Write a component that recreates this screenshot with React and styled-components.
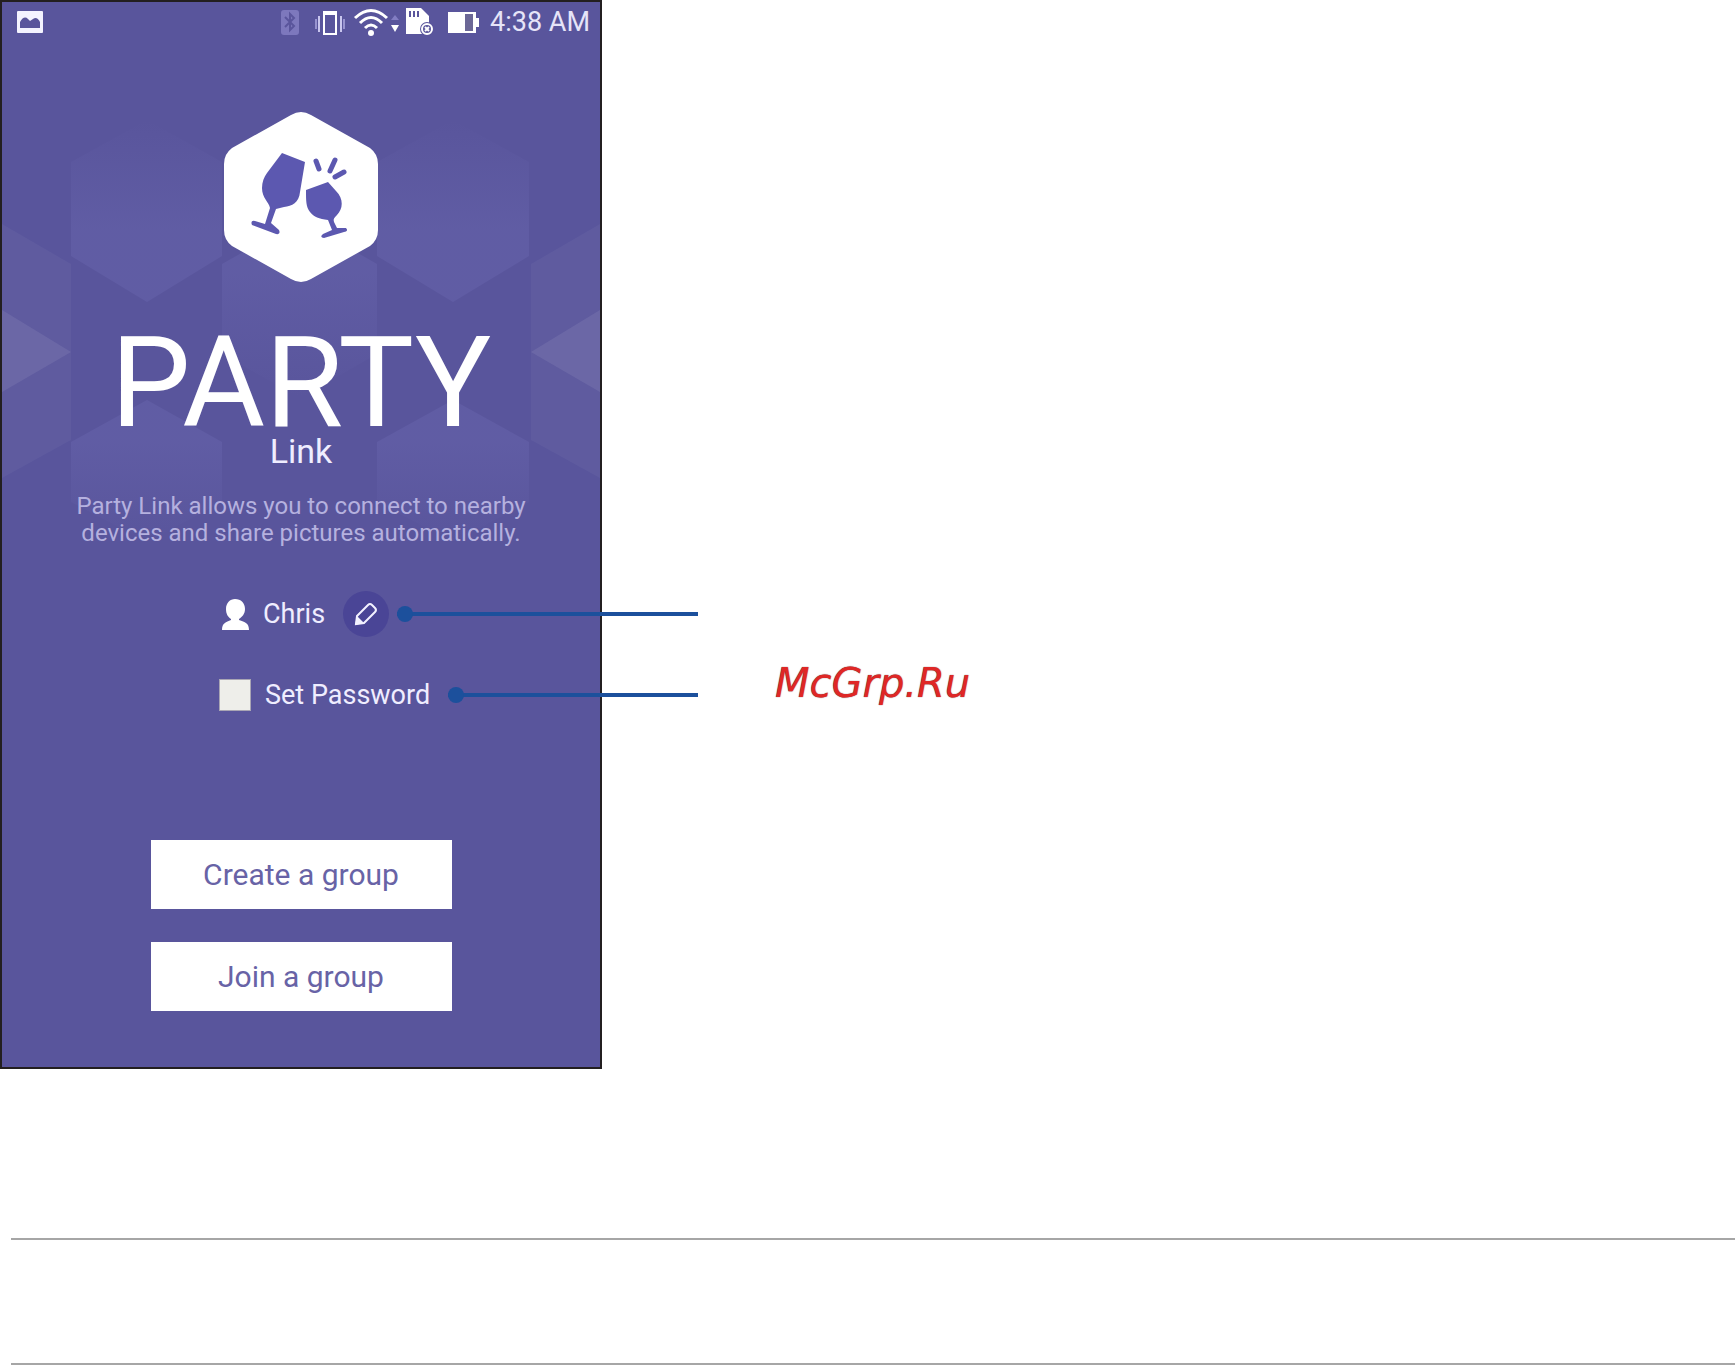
import React from "react";
import styled, { createGlobalStyle } from "styled-components";

const GlobalStyle = createGlobalStyle`
  * {
    box-sizing: border-box;
  }
  body {
    margin: 0;
    background: #ffffff;
    font-family: Roboto, "Liberation Sans", sans-serif;
  }
`;
const Page = styled.div`
  display: flex;
  flex-direction: column;
`;
const Figure = styled.main`
  display: flex;
  align-items: flex-start;
`;
const Phone = styled.section`
  position: relative;
  display: flex;
  flex-direction: column;
  align-items: center;
  width: 602px;
  padding-bottom: 56px;
  border: 2px solid #231f20;
  background: #59559c;
  color: #efedff;
`;
const Pattern = styled.svg`
  position: absolute;
  inset: 0;
  width: 100%;
`;
const StatusBar = styled.header`
  position: relative;
  display: flex;
  align-items: center;
  width: 100%;
  height: 40px;
  padding: 0 10px 0 15px;
`;
const StatusIcons = styled.div`
  display: flex;
  align-items: center;
  margin-left: auto;
  margin-right: 10px;
`;
const Clock = styled.time`
  font-size: 27px;
  line-height: 40px;
  color: #e6e4f8;
`;
const Logo = styled.svg`
  position: relative;
  width: 154px;
  height: 172px;
  margin-top: 69px;
`;
const Title = styled.h1`
  position: relative;
  margin: 52px 0 0;
  font-size: 127px;
  font-weight: 400;
  line-height: 96px;
  color: #ffffff;
`;
const Subtitle = styled.h2`
  position: relative;
  margin: 0;
  font-size: 34px;
  font-weight: 400;
  line-height: 40px;
`;
const Description = styled.p`
  position: relative;
  margin: 22px 0 0;
  font-size: 24px;
  line-height: 27px;
  text-align: center;
  color: #b5b1df;
`;
const Settings = styled.div`
  position: relative;
  display: flex;
  flex-direction: column;
  gap: 33px;
  width: 100%;
  margin-top: 43px;
  padding-left: 217px;
`;
const SettingRow = styled.div`
  position: relative;
  display: flex;
  align-items: center;
  height: 48px;
  font-size: 27px;
`;
const UserName = styled.span`
  margin: 0 18px 0 12px;
`;
const EditButton = styled.button`
  display: flex;
  align-items: center;
  justify-content: center;
  width: 46px;
  height: 46px;
  padding: 0;
  border: 0;
  border-radius: 50%;
  background: #4a4596;
`;
const PasswordBox = styled.input`
  appearance: none;
  width: 32px;
  height: 32px;
  margin: 0 14px 0 0;
  border: 1px solid #a9a6b4;
  background: #eeeeea;
`;
const Callout = styled.span`
  position: absolute;
  left: ${(props) => props.$start}px;
  right: -98px;
  top: 22px;
  height: 4px;
  background: #1c509c;

  &::before {
    content: "";
    position: absolute;
    left: 0;
    top: -6px;
    width: 16px;
    height: 16px;
    border-radius: 50%;
    background: #1c509c;
  }
`;
const Actions = styled.div`
  position: relative;
  display: flex;
  flex-direction: column;
  gap: 33px;
  width: 301px;
  margin-top: 121px;
`;
const ActionButton = styled.button`
  height: 69px;
  padding: 0;
  border: 0;
  background: #ffffff;
  font-family: inherit;
  font-size: 30px;
  color: #6863a6;
`;
const Watermark = styled.p`
  margin: 661px 0 0 173px;
  font-family: "DejaVu Sans", sans-serif;
  font-size: 40px;
  font-style: italic;
  line-height: 44px;
  color: #df2726;
  text-shadow: 0 0 1px #5b2b2b;
`;
const Rules = styled.footer`
  display: flex;
  flex-direction: column;
  gap: 123px;
  margin: 169px 0 0 11px;
`;
const Rule = styled.hr`
  width: 100%;
  margin: 0;
  border: 0;
  border-top: 2px solid #a6a6a6;
`;

function HexPattern() {
  return (
    <Pattern viewBox="0 0 598 560" aria-hidden="true">
      <defs>
        <linearGradient id="fade-up" x1="0" y1="1" x2="0" y2="0">
          <stop offset="0.4" stopColor="#7c7ac4" stopOpacity="0.2" />
          <stop offset="1" stopColor="#7c7ac4" stopOpacity="0" />
        </linearGradient>
        <linearGradient id="fade-down" x1="0" y1="0" x2="0" y2="1">
          <stop offset="0.3" stopColor="#7c7ac4" stopOpacity="0.2" />
          <stop offset="1" stopColor="#7c7ac4" stopOpacity="0" />
        </linearGradient>
      </defs>
      <g fill="url(#fade-up)">
        <path d="M69 160 145 118 220 160V254L145 300 69 254Z" />
        <path d="M375 160 451 118 527 160V254L451 300 375 254Z" />
      </g>
      <g fill="url(#fade-down)">
        <path d="M220 262 298 218 375 262V352L298 396 220 352Z" />
        <path d="M69 440 145 398 220 440V500L145 540 69 500Z" />
        <path d="M375 440 451 398 527 440V500L451 540 375 500Z" />
      </g>
      <g fill="#ffffff" fillOpacity="0.04">
        <path d="M0 222 69 262V438L0 476Z" />
        <path d="M598 222 529 262V438L598 476Z" />
      </g>
      <g fill="#ffffff" fillOpacity="0.08">
        <path d="M0 308 69 350 0 390Z" />
        <path d="M598 308 529 350 598 390Z" />
      </g>
    </Pattern>
  );
}

function PartyLogo() {
  return (
    <Logo viewBox="0 0 154 172" role="img" aria-label="Party Link">
      <path
        fill="#ffffff"
        d="M67 4Q77-2 87 4L146 37Q154 43 154 53V119Q154 129 146 135L87 168Q77 174 67 168L8 135Q0 129 0 119V53Q0 43 8 37Z"
      />
      <g fill="#5c58b0">
        <path d="M58 42 81 51 76 81C75 92 68 95 60 96L52 98 47 112 55 119Q57 124 52 123L28 114Q26 109 31 110L41 113 46 97C45 91 38 87 38 77 38 71 40 66 43 62Z" />
        <path d="M82 79 104 71 112 80C120 88 119 98 113 104 110 107 109 108 110 111L113 117 122 117Q125 120 120 121L100 127Q95 126 99 123L108 119 104 109C95 108 90 106 86 101 82 96 82 90 82 79Z" />
      </g>
      <g fill="none" stroke="#5c58b0" strokeWidth="5" strokeLinecap="round">
        <path d="M92 50 95 58M111 49 106 60M111 66 120 61" />
      </g>
    </Logo>
  );
}

function StatusIconSet() {
  return (
    <svg width="200" height="30" viewBox="0 0 200 30" aria-hidden="true">
      {/* bluetooth */}
      <rect x="1" y="3" width="18" height="25" rx="3" fill="#7d78bd" />
      <path d="M5 10 14 19 10 23V7L14 11 5 20" fill="none" stroke="#5a559c" strokeWidth="2" />
      {/* vibrate */}
      <rect x="44" y="5" width="12" height="22" fill="none" stroke="#ffffff" strokeWidth="2" />
      <path d="M43 6H57" stroke="#ffffff" strokeWidth="4" />
      <path d="M39 9V25M61 9V25" stroke="#c9c6ee" strokeWidth="2" />
      <path d="M36 12V22M64 12V22" stroke="#9793cf" strokeWidth="2" />
      {/* wifi */}
      <g fill="none" stroke="#ffffff" strokeWidth="3">
        <path d="M75 11Q91-4 107 11" />
        <path d="M80 16Q91 5 102 16" />
        <path d="M85 21Q91 15 97 21" />
      </g>
      <circle cx="91" cy="26" r="3" fill="#ffffff" />
      <path d="M111 13 115 8 119 13Z" fill="#827dc2" />
      <path d="M111 18H119L115 25Z" fill="#ffffff" />
      {/* sd card */}
      <path d="M126 1H141L149 9V27H126Z" fill="#ffffff" />
      <path d="M130 4V10M134 4V10M138 4V10" stroke="#5a559c" strokeWidth="2" />
      <circle cx="147" cy="22" r="7" fill="#5a559c" />
      <circle cx="147" cy="22" r="5" fill="none" stroke="#ffffff" strokeWidth="2" />
      <path d="M145 20 149 24M149 20 145 24" stroke="#ffffff" strokeWidth="2" />
      {/* battery */}
      <path d="M168 5H196V11H199V20H196V26H168Z" fill="#ffffff" />
      <rect x="185" y="7" width="8" height="17" fill="#6b6796" />
    </svg>
  );
}

export default function App() {
  return (
    <Page>
      <GlobalStyle />
      <Figure>
        <Phone>
          <HexPattern />
          <StatusBar>
            <svg width="26" height="22" viewBox="0 0 26 22" aria-hidden="true">
              <rect width="26" height="22" rx="1" fill="#f4f3ff" />
              <path d="M3 17V11Q7 4 11 8L13 10 16 8Q20 5 23 11V17Z" fill="#5a559c" />
            </svg>
            <StatusIcons>
              <StatusIconSet />
            </StatusIcons>
            <Clock>4:38 AM</Clock>
          </StatusBar>
          <PartyLogo />
          <Title>PARTY</Title>
          <Subtitle>Link</Subtitle>
          <Description>
            Party Link allows you to connect to nearby
            <br />
            devices and share pictures automatically.
          </Description>
          <Settings>
            <SettingRow>
              <svg width="32" height="32" viewBox="0 0 32 32" aria-hidden="true">
                <path
                  fill="#ffffff"
                  d="M16 1C22 1 26 5 26 11 26 16 23 19 20 21V22C26 24 30 25 30 32H3C3 25 7 24 12 22V21C9 19 7 16 7 11 7 5 11 1 16 1Z"
                />
              </svg>
              <UserName>Chris</UserName>
              <EditButton type="button" aria-label="Edit name">
                <svg width="26" height="26" viewBox="0 0 26 26">
                  <path d="M4 15 15 4Q17 2 19 4L22 7Q24 9 22 11L11 22 3 23Z" fill="none" stroke="#f2f1ff" strokeWidth="2" />
                  <path d="M2 24 4 15 11 22Z" fill="#f2f1ff" />
                </svg>
              </EditButton>
              <Callout $start={178} />
            </SettingRow>
            <SettingRow>
              <PasswordBox type="checkbox" id="set-password" />
              <label htmlFor="set-password">Set Password</label>
              <Callout $start={229} />
            </SettingRow>
          </Settings>
          <Actions>
            <ActionButton type="button">Create a group</ActionButton>
            <ActionButton type="button">Join a group</ActionButton>
          </Actions>
        </Phone>
        <Watermark>McGrp.Ru</Watermark>
      </Figure>
      <Rules>
        <Rule />
        <Rule />
      </Rules>
    </Page>
  );
}
